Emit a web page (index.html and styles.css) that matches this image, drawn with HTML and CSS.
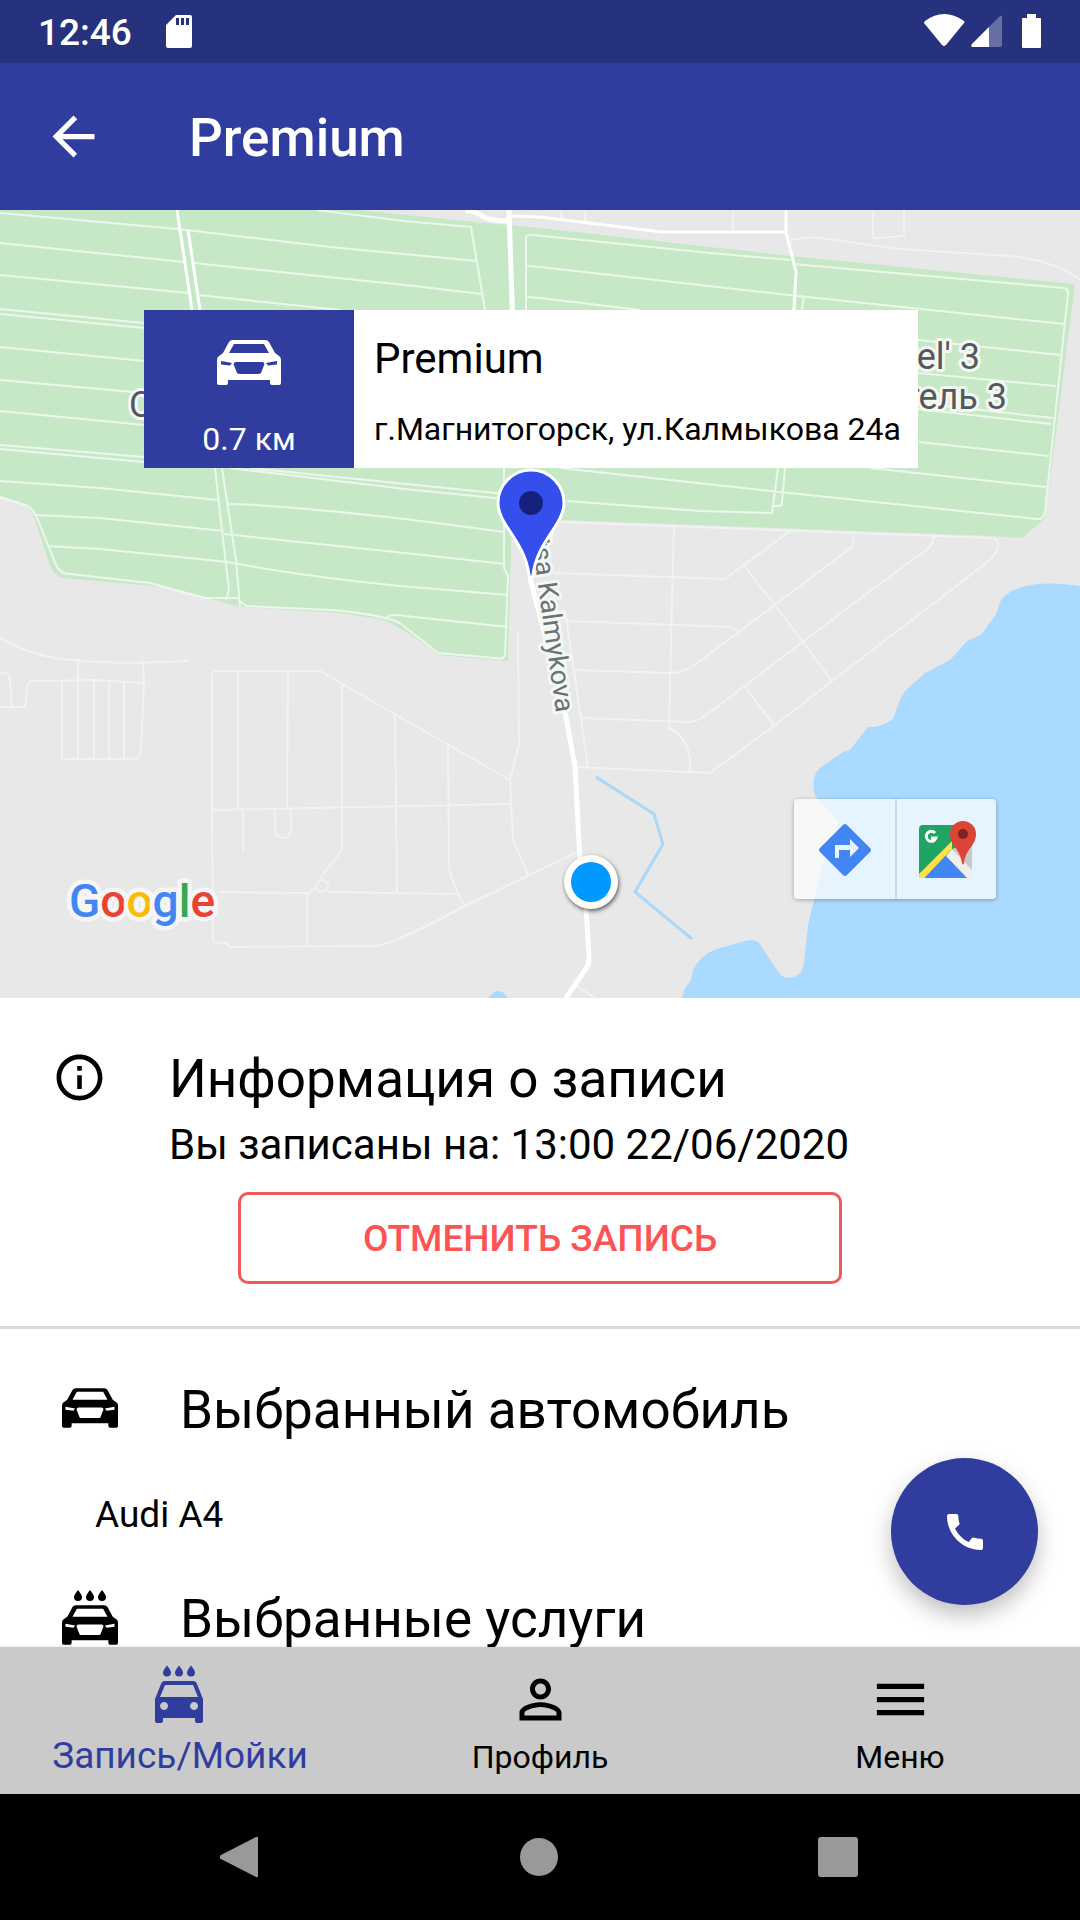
FILE: index.html
```html
<!DOCTYPE html>
<html lang="ru">
<head>
<meta charset="utf-8">
<meta name="viewport" content="width=device-width, initial-scale=1">
<title>Premium</title>
<link rel="stylesheet" href="styles.css">
</head>
<body>
<svg class="sprite" aria-hidden="true">
  <symbol id="car" viewBox="0 0 64 45">
    <path fill-rule="evenodd" d="M16 0H48q3 0 4 2L58 13l4 3q2 1 2 4V43q0 2-2 2H55q-2 0-2-2V40H11v3q0 2-2 2H2q-2 0-2-2V20q0-3 2-4l4-3L12 2q1-2 4-2zM17 4L12 13H52L47 4zM19 22q-2 0-2.500 2L20 33q1 1 3 1H41q2 0 3-1l3.500-9q-.5-2-2.500-2zM4 21v3.500L13 25.500l2-2.500zM60 21v3.500L51 25.500l-2-2.500z"/>
  </symbol>
  <symbol id="drops" viewBox="0 0 32 11">
    <path d="M4 0q4 5 4 7a4 4 0 0 1-8 0q0-2 4-7zM16 0q4 5 4 7a4 4 0 0 1-8 0q0-2 4-7zM28 0q4 5 4 7a4 4 0 0 1-8 0q0-2 4-7z"/>
  </symbol>
</svg>
<div class="app">
  <div class="status">
    <span class="clock">12:46</span>
    <svg class="sd" viewBox="0 0 26 33" aria-hidden="true"><path fill-rule="evenodd" d="M10 0H24q2 0 2 2V31q0 2-2 2H2q-2 0-2-2V10zM10 3v7h3V3zM15 3v7h3V3zM20 3v7h3V3z"/></svg>
    <svg class="signals" viewBox="0 0 118 34" aria-hidden="true">
      <path d="M1 7Q20-7 40 7q1 1 0 2L22 31q-2 2-4 0L0 9q0-1 1-2z"/>
      <path opacity=".3" d="M76 2q2-1 2 1V31q0 2-2 2H49q-3 0-1-3z"/>
      <path d="M65 13V33H49q-3 0-1-3z"/>
      <path d="M103 0h9v4h4q1 0 1 1V33q0 1-1 1H99q-1 0-1-1V5q0-1 1-1h4z"/>
    </svg>
  </div>
  <header class="bar">
    <button class="back" type="button" aria-label="Назад"><svg viewBox="0 0 24 24" aria-hidden="true"><path d="M20 11H7.830l5.590-5.590L12 4l-8 8 8 8 1.410-1.410L7.830 13H20v-2z"/></svg></button>
    <h1>Premium</h1>
  </header>
  <div class="body">
    <main class="scroll">
      <section class="map" aria-label="Карта">
        <svg class="tiles" viewBox="0 210 1080 788">
          <rect y="210" width="1080" height="788" fill="#e8e8e8"/>
          <path fill="#c7e8c7" d="M0 210H358L475 222 540 228 791 256 1075 284 1045 518 1022 538 991 536 561 520 512 516 508 661 438 655Q400 625 380 619L340 613 240 607 165 587 62 578Q52 574 50 565L33 514Q30 507 20 504L0 497z"/>
          <path fill="#aadaff" d="M1080 586Q1020 577 1001 600L996 614 981 635 967 641 950 660 925 673 905 691Q898 702 894 717 890 723 875 727H868L850 750 843 752Q828 762 820 768 810 778 815 795L839 822 822 867 808 925 804 963Q802 975 794 977 783 979 779 973L759 943Q754 938 745 941L717 949Q700 955 693 970L691 980 684 990 682 998H1080zM488 998Q499 984 508 998z"/>
          <g class="fields">
            <path d="M0 213L178 229 330 247 477 261M0 243L184 262M0 275L189 293M0 309L144 323M0 314L144 328M0 347L144 361M0 380L144 393M0 411L144 425M0 445L144 457M0 449L144 462M0 481L100 488 218 500M36 515L100 518 224 531M47 546L100 549 228 562"/>
            <path d="M194 263L405 285 482 294M198 295L340 310M317 210L404 221 471 227 485 310M215 468L222 531 229 590 226 600M222 468L236 560 240 607M230 468L405 489 505 499M250 468L505 494M228 504Q270 504 405 519L505 532M224 534L405 553 505 564M228 562Q300 576 400 586L508 595M385 619Q390 613 405 616L508 627M504 468V568L508 576 505 655Q504 660 495 658L438 653 400 623Q380 614 330 610L246 606 240 601"/>
            <path d="M0 497L28 506Q34 510 38 520L56 565Q60 574 70 574L150 583 205 598H240M526 310V238Q526 234 533 235L710 253 790 260M793 264L1064 288Q1068 289 1068 293L1045 512Q1043 520 1037 519L780 492 560 468M526 266L540 267 798 296 1064 324M526 297L540 298 640 310M918 340L1060 355M918 373L1056 386M918 403L1053 418M918 409L1051 424M919 442L1049 456M870 468L1046 487M567 501L700 511 772 513 778 468M774 506H779Q782 506 782 502L785 468M804 296L802 310"/>
          </g>
          <g class="lanes">
            <path d="M561 210V219M585 210V222M733 210V231M873 210V235Q873 238 877 238L904 236V210M788 241Q805 236 820 238L900 249 1010 256Q1060 262 1080 280M561 522L991 538M674 524L672 600 669 728Q693 740 690 773M554 573L725 579 790 531M567 621L730 627 738 631M573 670L672 673Q686 672 700 661L852 547 854 535M580 718L690 722Q698 721 705 716L858 600 930 547 935 535M576 767L710 773 775 725 832 681 938 600 990 560Q1004 545 993 537M745 567L775 605 832 681M745 687L774 725M565 610L588 767M575 985L595 998"/>
            <path d="M0 638Q40 660 78 660 110 665 188 661M78 660V759M143 660L144 683 141 750Q140 759 133 759H62V681M0 673Q8 670 10 680L12 707M0 707H25L27 688Q27 681 34 681L94 680 144 683M94 681V759M109 682V759M124 683V759M212 810V675Q212 671 218 671H320L405 720 510 780 519 745 518 633M212 810L512 804M238 671V810M288 671L287 808M342 685V850L320 878M395 715L397 893M448 745L449 865Q450 880 465 906M510 780L513 840 528 875M212 810L213 940Q213 943 226 943L230 947 375 946Q390 946 465 906L575 853M219 892L308 893 316 888M328 892L457 894M307 893V946M275 809V830Q276 838 283 838T291 830V809M243 809V851"/>
            <circle cx="322" cy="886" r="6"/>
          </g>
          <path class="stream" d="M596 777L654 814 663 844 635 892 692 939"/>
          <path class="road" d="M177 210L192 310M188 230L200 310M512 216L540 217 662 232H786M786 210V232L796 272 794 310"/>
          <path class="road road-wide" d="M465 210Q478 212 484 217 492 221 509 221M509 210L513 330M530 578L565 712 575 766 580 860 586 905 589 958Q589 965 585 970L566 998"/>
          <g class="place">
            <text x="129" y="417">С</text>
            <text x="980" y="369" text-anchor="end">Stroitel' 3</text>
            <text x="1007" y="409" text-anchor="end">Строитель 3</text>
          </g>
          <text class="street" text-anchor="end" transform="translate(556 713) rotate(82)">Ulitsa Kalmykova</text>
          <path fill="#344feb" stroke="#fff" stroke-width="3" d="M531 470a33 33 0 0 1 33 33c0 22-27 38-31 72q-2 6-4 0c-4-34-31-50-31-72a33 33 0 0 1 33-33z"/>
          <circle cx="531" cy="503" r="12" fill="#16217f"/>
          <g class="me">
            <circle cx="591" cy="882" r="27" fill="#fffefa"/>
            <circle cx="591" cy="882" r="20" fill="#09f"/>
          </g>
          <text class="google" x="69" y="917"><tspan fill="#4285f4">G</tspan><tspan fill="#ea4335">o</tspan><tspan fill="#fbbc05">o</tspan><tspan fill="#4285f4">g</tspan><tspan fill="#34a853">l</tspan><tspan fill="#ea4335">e</tspan></text>
        </svg>
        <div class="card">
          <div class="distance">
            <svg class="car-lg" aria-hidden="true"><use href="#car"/></svg>
            <span>0.7 км</span>
          </div>
          <div class="place-info">
            <strong>Premium</strong>
            <span>г.Магнитогорск, ул.Калмыкова 24а</span>
          </div>
        </div>
        <div class="map-tools">
          <button type="button" aria-label="Маршрут"><svg viewBox="0 0 54 54" aria-hidden="true"><path fill="#4285f4" d="M25 2q2-2 4 0L52 25q2 2 0 4L29 52q-2 2-4 0L2 29q-2-2 0-4z"/><path fill="#e9f3ff" d="M17 35V22H32V16l9 9-9 9V27H21v8z"/></svg></button>
          <button type="button" aria-label="Google Карты"><svg viewBox="0 0 58 58" aria-hidden="true">
            <path fill="#1fa463" d="M5 4H40V28L1 56V8q0-4 4-4z"/>
            <path fill="#c8c8c8" d="M34 28L54 20V53z"/>
            <path fill="#4285f4" d="M6 57L28 34 50 57z"/>
            <path fill="#eee" d="M28 35l6-7L54 49v6q0 2-2 2H49z"/>
            <path fill="#ffe047" d="M34 20v8L6 57H3q-2 0-2-2V53z"/>
            <path fill="none" stroke="#fff" stroke-width="3" d="M17 12a5 5 0 1 0 1 5H13"/>
            <path fill="#db4437" d="M45 0a13 13 0 0 1 13 13c0 12-10 14-12 29q-1 3-2 0C42 27 32 25 32 13A13 13 0 0 1 45 0z"/>
            <circle cx="45" cy="13" r="5" fill="#7b231e"/>
          </svg></button>
        </div>
      </section>
      <section class="booking">
        <svg class="info" viewBox="0 0 24 24" aria-hidden="true"><path d="M11 7h2v2h-2zm0 4h2v6h-2zm1-9C6.480 2 2 6.480 2 12s4.480 10 10 10 10-4.480 10-10S17.520 2 12 2zm0 18c-4.410 0-8-3.590-8-8s3.590-8 8-8 8 3.590 8 8-3.590 8-8 8z"/></svg>
        <div class="booking-text">
          <h2>Информация о записи</h2>
          <p>Вы записаны на: 13:00 22/06/2020</p>
        </div>
        <button class="cancel" type="button">ОТМЕНИТЬ ЗАПИСЬ</button>
      </section>
      <section class="details">
        <div class="heading">
          <svg class="car-sm" aria-hidden="true"><use href="#car"/></svg>
          <h2>Выбранный автомобиль</h2>
        </div>
        <p class="model">Audi A4</p>
        <div class="heading">
          <span class="wash">
            <svg class="drops" aria-hidden="true"><use href="#drops"/></svg>
            <svg class="car-sm" aria-hidden="true"><use href="#car"/></svg>
          </span>
          <h2>Выбранные услуги</h2>
        </div>
      </section>
    </main>
    <button class="call" type="button" aria-label="Позвонить"><svg viewBox="0 0 24 24" aria-hidden="true"><path d="M20.010 15.380c-1.230 0-2.420-.2-3.530-.56-.35-.12-.74-.03-1.010.24l-1.570 1.970c-2.830-1.350-5.480-3.900-6.890-6.830l1.950-1.660c.27-.28.35-.67.24-1.020-.37-1.110-.56-2.300-.56-3.530 0-.54-.45-.99-.99-.99H4.190C3.650 3 3 3.240 3 3.990 3 13.280 10.730 21 20.010 21c.71 0 .99-.63.99-1.180v-3.450c0-.54-.45-.99-.99-.99z"/></svg></button>
  </div>
  <nav class="tabs">
    <a class="tab tab-active" href="#wash" aria-current="page">
      <svg viewBox="0 0 63 63" aria-hidden="true"><use href="#drops" x="14" y="-3" width="32" height="12"/><path fill-rule="evenodd" d="M16 13H44q3 0 4 3L54 31V53q0 2-3 2H49q-3 0-3-2V50H14v3q0 2-3 2H9q-3 0-3-2V31L12 16q1-3 4-3zM16 17L11 29H49L44 17zM15 34a4 4 0 1 0 .1 0zM45 34a4 4 0 1 0 .1 0z"/></svg>
      <span>Запись/Мойки</span>
    </a>
    <a class="tab" href="#profile">
      <svg viewBox="0 0 24 24" aria-hidden="true"><path d="M12 5.900c1.160 0 2.100.94 2.100 2.100s-.94 2.100-2.100 2.100S9.900 9.160 9.900 8s.94-2.100 2.100-2.100m0 9c2.970 0 6.100 1.460 6.100 2.100v1.100H5.900V17c0-.64 3.130-2.100 6.100-2.100M12 4C9.790 4 8 5.790 8 8s1.790 4 4 4 4-1.790 4-4-1.790-4-4-4zm0 9c-2.670 0-8 1.340-8 4v3h16v-3c0-2.660-5.330-4-8-4z"/></svg>
      <span>Профиль</span>
    </a>
    <a class="tab" href="#menu">
      <svg viewBox="0 0 24 24" aria-hidden="true"><path d="M3 18h18v-2H3v2zm0-5h18v-2H3v2zm0-7v2h18V6H3z"/></svg>
      <span>Меню</span>
    </a>
  </nav>
  <div class="system">
    <button type="button" aria-label="Назад"><svg viewBox="0 0 42 42" aria-hidden="true"><path d="M36 1q2-1 2 1V40q0 2-2 1L1 23q-3-2 0-4z"/></svg></button>
    <button type="button" aria-label="Домой"><svg viewBox="0 0 42 42" aria-hidden="true"><circle cx="20" cy="21" r="19"/></svg></button>
    <button type="button" aria-label="Недавние"><svg viewBox="0 0 42 42" aria-hidden="true"><rect y="1" width="40" height="40" rx="3"/></svg></button>
  </div>
</div>
</body>
</html>
```
FILE: styles.css
```css
* {
  box-sizing: border-box;
}

body {
  margin: 0;
  background: #fff;
  color: #000;
  font-family: Roboto, "Liberation Sans", sans-serif;
}

h1,
h2,
p {
  margin: 0;
}

button {
  margin: 0;
  padding: 0;
  border: 0;
  background: none;
  color: inherit;
  font: inherit;
}

svg {
  display: block;
  flex: none;
  fill: currentColor;
}

.sprite {
  position: absolute;
  width: 0;
  height: 0;
}

.app {
  display: flex;
  flex-direction: column;
  height: 100vh;
}

/* Top bars */

.status {
  display: flex;
  align-items: center;
  flex: none;
  padding: 9px 38px 6px;
  background: #27327f;
  color: #fff;
}

.clock {
  font-size: 37px;
  font-weight: 500;
  line-height: 48px;
}

.sd {
  width: 26px;
  height: 33px;
  margin-left: 34px;
}

.signals {
  width: 118px;
  height: 34px;
  margin-left: auto;
}

.sd,
.signals {
  margin-bottom: 4px;
}

.bar {
  display: flex;
  align-items: center;
  flex: none;
  gap: 84px;
  padding: 42px;
  background: #303d9f;
  color: #fff;
}

.back svg {
  width: 63px;
  height: 63px;
}

.bar h1 {
  padding-top: 4px;
  font-size: 53px;
  font-weight: 500;
  line-height: 59px;
}

/* Scrolling area */

.body {
  position: relative;
  flex: 1;
  min-height: 0;
}

.scroll {
  height: 100%;
  overflow: auto;
  scrollbar-width: none;
}

.map {
  position: relative;
}

.tiles {
  width: 100%;
  height: auto;
}

.fields,
.lanes {
  fill: none;
  stroke: #fff;
  stroke-width: 2;
}

.fields {
  opacity: .65;
}

.lanes {
  opacity: .45;
}

.stream {
  fill: none;
  stroke: #aad8f8;
  stroke-width: 3;
}

.road {
  fill: none;
  stroke: #fff;
  stroke-width: 3;
}

.road-wide {
  stroke-width: 5;
}

.place,
.street {
  fill: #55585b;
  stroke: #f4f8f4;
  stroke-width: 6;
  stroke-linejoin: round;
  paint-order: stroke;
}

.place {
  font-size: 36px;
}

.street {
  fill: #6b7276;
  font-size: 27px;
}

.me {
  filter: drop-shadow(1px 2px 2px rgb(0 0 0 / 60%));
}

.google {
  font-size: 46px;
  font-weight: 500;
  stroke: #f6f6f6;
  stroke-width: 9;
  stroke-linejoin: round;
  paint-order: stroke;
}

.card {
  position: absolute;
  top: 100px;
  left: 144px;
  display: flex;
  background: #fff;
  font-size: 32px;
  line-height: 38px;
}

.distance {
  display: flex;
  flex-direction: column;
  align-items: center;
  justify-content: space-between;
  width: 210px;
  padding: 30px 0 10px;
  background: #303d9f;
  color: #fff;
}

.car-lg {
  width: 64px;
  height: 45px;
}

.place-info {
  display: flex;
  flex-direction: column;
  gap: 26px;
  padding: 24px 17px 20px 20px;
}

.place-info strong {
  font-size: 42px;
  font-weight: 400;
  line-height: 50px;
}

.map-tools {
  position: absolute;
  right: 84px;
  bottom: 99px;
  display: flex;
  border-radius: 4px;
  background: rgb(255 255 255 / 70%);
  box-shadow: 0 1px 4px rgb(0 0 0 / 30%);
}

.map-tools button {
  display: grid;
  place-items: center;
  width: 101px;
  height: 100px;
  padding-top: 2px;
}

.map-tools button + button {
  border-left: 2px solid #c9d9e8;
}

.map-tools svg {
  width: 54px;
  height: 54px;
}

.map-tools button + button svg {
  width: 58px;
  height: 58px;
}

/* Booking */

h2 {
  font-size: 53px;
  font-weight: 400;
  line-height: 62px;
}

.booking {
  display: grid;
  grid-template-columns: 55px 1fr;
  column-gap: 62px;
  row-gap: 22px;
  padding: 50px 52px 42px;
  border-bottom: 3px solid #d9d9d9;
}

.info {
  width: 55px;
  height: 55px;
  margin-top: 2px;
}

.booking-text {
  display: grid;
  gap: 10px;
}

.booking-text p {
  font-size: 42px;
  line-height: 50px;
}

.cancel {
  grid-column: 1 / -1;
  justify-self: center;
  width: 604px;
  height: 92px;
  border: 3px solid #ee5a5a;
  border-radius: 10px;
  color: #fc5454;
  font-size: 37px;
  font-weight: 500;
}

.details {
  display: grid;
  gap: 51px;
  padding: 50px 62px;
}

.heading {
  display: flex;
  align-items: flex-start;
  gap: 62px;
}

.heading > .car-sm {
  margin-top: 9px;
}

.wash {
  display: grid;
  justify-items: center;
  gap: 4px;
  margin-top: 2px;
}

.car-sm {
  width: 56px;
  height: 40px;
}

.drops {
  width: 32px;
  height: 11px;
}

.model {
  padding-left: 33px;
  font-size: 37px;
  line-height: 45px;
}

.call {
  position: absolute;
  right: 42px;
  bottom: 42px;
  display: grid;
  place-items: center;
  width: 147px;
  height: 147px;
  border-radius: 50%;
  background: #303d9f;
  color: #fff;
  box-shadow: 0 10px 22px rgb(0 0 0 / 25%);
}

.call svg {
  width: 48px;
  height: 48px;
}

/* Bottom bars */

.tabs {
  position: relative;
  display: grid;
  grid-template-columns: repeat(3, 1fr);
  flex: none;
  padding: 21px 0 15px;
  background: #cacaca;
  box-shadow: 0 -1px 4px rgb(0 0 0 / 8%);
}

.tab {
  display: flex;
  flex-direction: column;
  align-items: center;
  gap: 4px;
  color: inherit;
  font-size: 32px;
  line-height: 44px;
  text-decoration: none;
}

.tab svg {
  width: 63px;
  height: 63px;
  overflow: visible;
}

.tab-active {
  color: #303d9f;
  font-size: 37px;
  line-height: 42px;
}

.system {
  display: flex;
  justify-content: center;
  flex: none;
  gap: 257px;
  padding: 42px;
  background: #000;
  color: #999;
}

.system svg {
  width: 42px;
  height: 42px;
}
```
